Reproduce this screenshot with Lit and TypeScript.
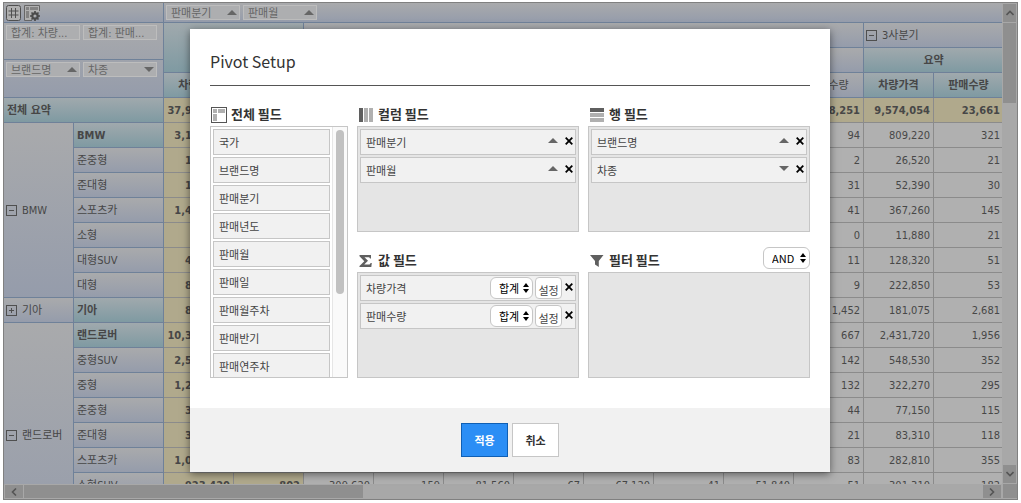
import { LitElement, html, css, svg, nothing } from "lit";
import { customElement, property } from "lit/decorators.js";
import { classMap } from "lit/directives/class-map.js";

interface Row {
  group?: string;
  open?: boolean;
  span?: number;
  label: string;
  total?: boolean;
  values: string[];
}

const pad = (head: string[], tail: string[]): string[] => [
  ...head,
  ...Array(12 - head.length - tail.length).fill(""),
  ...tail,
];

const ROWS: Row[] = [
  { group: "BMW", open: true, span: 7, label: "BMW", total: true, values: pad(["3,120,480"], ["94", "809,220", "321"]) },
  { label: "준중형", values: pad(["108,480"], ["2", "26,520", "21"]) },
  { label: "준대형", values: pad(["182,310"], ["31", "52,390", "30"]) },
  { label: "스포츠카", values: pad(["1,412,500"], ["41", "367,260", "145"]) },
  { label: "소형", values: pad(["47,520"], ["0", "11,880", "21"]) },
  { label: "대형SUV", values: pad(["491,200"], ["11", "128,320", "51"]) },
  { label: "대형", values: pad(["878,470"], ["9", "222,850", "53"]) },
  { group: "기아", open: false, span: 1, label: "기아", total: true, values: pad(["812,225"], ["1,452", "181,075", "2,681"]) },
  { group: "랜드로버", open: true, span: 9, label: "랜드로버", total: true, values: pad(["10,321,400"], ["667", "2,431,720", "1,956"]) },
  { label: "중형SUV", values: pad(["2,540,120"], ["142", "548,530", "352"]) },
  { label: "중형", values: pad(["1,268,300"], ["132", "322,270", "295"]) },
  { label: "준중형", values: pad(["312,600"], ["44", "77,150", "115"]) },
  { label: "준대형", values: pad(["342,840"], ["21", "83,310", "118"]) },
  { label: "스포츠카", values: pad(["1,084,220"], ["83", "282,810", "355"]) },
  { label: "소형SUV", values: ["923,420", "802", "309,620", "159", "81,560", "67", "67,120", "41", "51,840", "51", "301,310", "182"] },
  { label: "", values: pad([], []) },
  { label: "", values: pad([], []) },
];

const base = css`
  * {
    box-sizing: border-box;
  }
  svg {
    display: block;
    flex: none;
  }
`;

const arrow = (dir: string) => svg`
  <svg width="10" height="5" viewBox="0 0 10 5" fill="currentColor">
    <path d=${dir === "up" ? "M0 5L5 0L10 5Z" : "M0 0L5 5L10 0Z"} />
  </svg>`;

@customElement("pivot-grid")
class PivotGrid extends LitElement {
  static styles = [
    base,
    css`
      :host {
        display: grid;
        grid-template-columns: minmax(0, 1fr) 15px;
        grid-template-rows: minmax(0, 1fr) 15px;
        height: 100%;
        border: 1px solid #808080;
        background: #a8a8a8;
        color: #474747;
        font: 11px/14px "DejaVu Sans Condensed", "Noto Sans CJK KR", sans-serif;
      }
      .view {
        overflow: hidden;
      }
      table {
        table-layout: fixed;
        width: 1000px;
        border-spacing: 0;
      }
      .c-group,
      .c-value {
        width: 70px;
      }
      .c-kind {
        width: 90px;
      }
      th,
      td {
        height: 25px;
        padding: 2px 3px 0;
        border: 0 solid #6f8199;
        border-width: 0 1px 1px 0;
        font-weight: 400;
        overflow: hidden;
        white-space: nowrap;
      }
      .top th {
        height: 20px;
      }
      .top th,
      th.lead {
        padding: 0 2px;
      }
      th {
        background: linear-gradient(#a9aaac, #959cab);
        text-align: left;
      }
      .deep {
        background: linear-gradient(#a0a9ad, #7f9aa2);
        font-weight: 700;
      }
      .mid {
        text-align: center;
      }
      td {
        background: #b0b0b0;
        border-color: #8b8b8b;
        text-align: right;
      }
      .sum {
        background: #b0a98c;
        font-weight: 700;
      }
      th.corner {
        padding: 0;
        vertical-align: top;
      }
      .zone {
        height: 37px;
        padding: 2px;
        border-bottom: 1px solid #6f8199;
      }
      .zone + .zone {
        border-bottom: 0;
      }
      .chips,
      .tools {
        display: flex;
        align-items: center;
        gap: 3px;
      }
      .chip {
        display: flex;
        align-items: center;
        justify-content: space-between;
        width: 74px;
        height: 15px;
        padding: 0 2px 0 4px;
        border: 1px solid #bdbdbd;
        background: #adaeb0;
        color: #666;
      }
      .word {
        padding-top: 2px;
      }
      .node {
        display: flex;
        align-items: center;
        gap: 5px;
      }
      .tools button {
        display: block;
        padding: 0;
        border: 0;
        background: none;
        color: #555;
      }
      .bar-y,
      .bar-x {
        display: flex;
        gap: 1px;
        padding: 1px;
        color: #555;
      }
      .bar-y {
        flex-direction: column;
      }
      .end {
        display: grid;
        place-items: center;
        padding: 0;
        border: 0;
        background: #8f8f8f;
        color: #555;
      }
      .bar-y .end {
        width: 13px;
        height: 18px;
      }
      .bar-x .end {
        width: 18px;
        height: 13px;
      }
      .rail {
        flex: 1;
      }
      .thumb {
        background: #8f8f8f;
      }
      .bar-y .thumb {
        height: 80px;
      }
      .bar-x .thumb {
        width: 34%;
        height: 13px;
      }
      .joint {
        background: #8f8f8f;
        margin: 0 0 1px 1px;
      }
    `,
  ];

  private chip(text: string, dir = "") {
    return html`<span class="chip"><span class="word">${text}</span>${dir ? arrow(dir) : nothing}</span>`;
  }

  private node(text: string, open: boolean) {
    return html`<span class="node">
      <svg width="11" height="11" viewBox="0 0 11 11" fill="none" stroke="#4f4f4f">
        <rect x=".5" y=".5" width="10" height="10" />
        <path d=${open ? "M3 5.5H8" : "M3 5.5H8M5.5 3V8"} />
      </svg>
      <span class="word">${text}</span>
    </span>`;
  }

  private chevron(d: string) {
    return svg`<svg width="8" height="8" viewBox="0 0 8 8" fill="none" stroke="currentColor" stroke-width="1.6"><path d=${d} /></svg>`;
  }

  render() {
    return html`
      <div class="view">
        <table>
          <colgroup>
            <col class="c-group" />
            <col class="c-kind" />
            ${Array.from({ length: 12 }, () => html`<col class="c-value" />`)}
          </colgroup>
          <thead>
            <tr class="top">
              <th colspan="2">
                <div class="tools">
                  <button aria-label="Grid">
                    <svg width="15" height="16" viewBox="0 0 15 16" fill="none" stroke="#505050">
                      <rect x=".5" y=".5" width="14" height="15" rx="2" fill="#b0b0b0" />
                      <path d="M5.5 3V13M9.5 3V13M2.5 6H12.5M2.5 10H12.5" />
                    </svg>
                  </button>
                  <button aria-label="Pivot Setup">
                    <svg width="16" height="16" viewBox="0 0 16 16">
                      <path d="M8 15.5H.5V.5H15.5V6" fill="#b0b0b0" stroke="#666" />
                      <path d="M2 2H5V5H2ZM6 2H14V5H6ZM2 6H5V13H2Z" fill="#838383" />
                      <circle cx="11" cy="11" r="2.7" fill="none" stroke="#4b4b4b" stroke-width="2.2" />
                      <path d="M11 6V8M11 14V16M6 11H8M14 11H16M7.5 7.5L9 9M13 13L14.5 14.5M14.5 7.5L13 9M9 13L7.5 14.5" stroke="#4b4b4b" stroke-width="1.7" />
                    </svg>
                  </button>
                </div>
              </th>
              <th colspan="12">
                <div class="chips">${this.chip("판매분기", "up")}${this.chip("판매월", "up")}</div>
              </th>
            </tr>
            <tr>
              <th class="corner" colspan="2" rowspan="3">
                <div class="zone"><div class="chips">${this.chip("합계: 차량...")}${this.chip("합계: 판매...")}</div></div>
                <div class="zone"><div class="chips">${this.chip("브랜드명", "up")}${this.chip("차종", "down")}</div></div>
              </th>
              <th class="deep" colspan="2" rowspan="2"></th>
              <th colspan="8"></th>
              <th class="lead" colspan="2">${this.node("3사분기", true)}</th>
            </tr>
            <tr>
              <th class="deep" colspan="2"></th>
              <th colspan="2"></th>
              <th colspan="2"></th>
              <th colspan="2"></th>
              <th class="deep mid" colspan="2">요약</th>
            </tr>
            <tr>
              ${Array.from({ length: 12 }, (_, i) => html`
                <th class=${classMap({ mid: true, deep: i < 4 || i > 9 })}>${i % 2 ? "판매수량" : "차량가격"}</th>
              `)}
            </tr>
          </thead>
          <tbody>
            <tr>
              <th class="deep" colspan="2">전체 요약</th>
              ${pad(["37,942,610"], ["8,251", "9,574,054", "23,661"]).map((v) => html`<td class="sum">${v}</td>`)}
            </tr>
            ${ROWS.map(
              (r) => html`<tr>
                ${r.span ? html`<th class="lead" rowspan=${r.span}>${this.node(r.group!, r.open!)}</th>` : nothing}
                <th class=${classMap({ deep: !!r.total })}>${r.label}</th>
                ${r.values.map((v, i) => html`<td class=${classMap({ sum: i < 2 })}>${v}</td>`)}
              </tr>`
            )}
          </tbody>
        </table>
      </div>
      <div class="bar-y">
        <button class="end" aria-label="Up">${this.chevron("M0.5 6L4 2.5L7.5 6")}</button>
        <div class="thumb"></div>
        <div class="rail"></div>
        <button class="end" aria-label="Down">${this.chevron("M0.5 2L4 5.5L7.5 2")}</button>
      </div>
      <div class="bar-x">
        <button class="end" aria-label="Left">${this.chevron("M6 .5L2.5 4L6 7.5")}</button>
        <div class="thumb"></div>
        <div class="rail"></div>
        <button class="end" aria-label="Right">${this.chevron("M2 .5L5.5 4L2 7.5")}</button>
      </div>
      <div class="joint"></div>
    `;
  }
}

@customElement("field-item")
class FieldItem extends LitElement {
  @property() label = "";
  @property() sort = "";
  @property({ type: Boolean }) summary = false;
  @property({ type: Boolean }) removable = false;

  static styles = [
    base,
    css`
      :host {
        display: flex;
        align-items: center;
        flex: none;
        box-sizing: border-box;
        height: 26px;
        padding: 0 2px 0 5px;
        border: 1px solid #c6c6c6;
        background: #f1f1f1;
      }
      .name {
        flex: 1;
        padding-bottom: 1px;
      }
      .sort {
        margin-right: 7px;
        padding-bottom: 3px;
        color: #666;
      }
      .remove {
        padding: 0 0 3px;
        border: 0;
        background: none;
        color: #000;
      }
      .set {
        width: 27px;
        height: 22px;
        margin: 0 3px 0 2px;
        padding: 3px 0 0;
        border: 1px solid #c6c6c6;
        border-radius: 4px;
        background: #fff;
        color: #444;
        font: inherit;
      }
    `,
  ];

  render() {
    return html`
      <span class="name">${this.label}</span>
      ${this.sort ? html`<span class="sort">${arrow(this.sort)}</span>` : nothing}
      ${this.summary
        ? html`<pick-list label=${this.label} value="합계"></pick-list><button class="set">설정</button>`
        : nothing}
      ${this.removable
        ? html`<button class="remove" aria-label="${this.label} 삭제">
            <svg width="8" height="8" viewBox="0 0 8 8" stroke="currentColor" stroke-width="1.8"><path d="M.7 .7L7.3 7.3M7.3 .7L.7 7.3" /></svg>
          </button>`
        : nothing}
    `;
  }
}

@customElement("pick-list")
class PickList extends LitElement {
  @property() label = "";
  @property() value = "";

  static styles = [
    base,
    css`
      :host {
        display: grid;
        align-items: center;
        justify-items: end;
      }
      select,
      svg {
        grid-area: 1 / 1;
      }
      select {
        appearance: none;
        width: 100%;
        height: 22px;
        padding: 0 12px 0 8px;
        border: 1px solid #c6c6c6;
        border-radius: 6px;
        background: #fff;
        color: #000;
        font-family: inherit;
        font-size: 11px;
      }
      svg {
        margin-right: 4px;
        pointer-events: none;
      }
    `,
  ];

  render() {
    return html`
      <select aria-label=${this.label}>
        <option>${this.value}</option>
      </select>
      <svg width="6" height="10" viewBox="0 0 6 10"><path d="M0 4L3 0L6 4ZM0 6L3 10L6 6Z" /></svg>
    `;
  }
}

@customElement("pivot-setup")
class PivotSetup extends LitElement {
  static styles = [
    base,
    css`
      :host {
        display: block;
        width: 640px;
        max-width: 100%;
        background: #fff;
        box-shadow: 0 2px 8px rgba(0, 0, 0, 0.5);
        color: #444;
        font: 11px/16px "Noto Sans CJK KR", sans-serif;
      }
      .title {
        margin: 0 20px;
        padding: 20px 0 12px;
        border-bottom: 1px solid #555;
        color: #333;
        font-size: 16px;
        font-weight: 400;
        line-height: 24px;
      }
      .body {
        display: grid;
        grid-template-columns: 138px 1fr 1fr;
        column-gap: 9px;
        padding: 0 20px 30px;
      }
      .all {
        grid-row: span 2;
      }
      .head {
        display: flex;
        align-items: flex-end;
        height: 40px;
        gap: 5px;
        padding: 0 0 3px 2px;
      }
      .all .head {
        gap: 4px;
        padding-left: 1px;
      }
      .head svg {
        margin-bottom: 1px;
      }
      .all .head svg {
        margin-bottom: 0;
      }
      h3 {
        flex: 1;
        margin: 0;
        color: #333;
        font-size: 13px;
        font-weight: 700;
        line-height: 18px;
      }
      .head pick-list {
        width: 47px;
      }
      .box {
        display: flex;
        flex-direction: column;
        gap: 2px;
        height: 106px;
        padding: 2px;
        border: 1px solid #c6c6c6;
        background: #e5e5e5;
      }
      .scroll {
        display: flex;
        height: 252px;
        border: 1px solid #c6c6c6;
      }
      .list {
        display: flex;
        flex: 1;
        flex-direction: column;
        gap: 2px;
        padding: 2px;
        overflow: hidden;
      }
      .track {
        width: 15px;
        padding: 3px;
        border-left: 1px solid #e6e6e6;
        background: #fafafa;
      }
      .thumb {
        width: 8px;
        height: 164px;
        border-radius: 4px;
        background: #c1c1c1;
      }
      .foot {
        display: flex;
        justify-content: center;
        gap: 4px;
        padding: 15px;
        background: #f1f1f1;
      }
      .foot button {
        width: 47px;
        height: 34px;
        padding: 0;
        border: 1px solid #c6c6c6;
        background: #fff;
        color: #333;
        font: 700 11px/16px "Noto Sans CJK KR", sans-serif;
      }
      .foot .apply {
        border-color: #0f5fb4;
        background: #2b8ef5;
        color: #fff;
      }
    `,
  ];

  private fields = ["국가", "브랜드명", "판매분기", "판매년도", "판매월", "판매일", "판매월주차", "판매반기", "판매연주차"];

  render() {
    return html`
      <h2 class="title">Pivot Setup</h2>
      <div class="body">
        <section class="all">
          <div class="head">
            <svg width="16" height="16" viewBox="0 0 16 16">
              <rect x=".5" y=".5" width="15" height="15" fill="#fff" stroke="#555" />
              <path d="M2 2H6V6H2ZM7 2H14V6H7ZM2 7H6V14H2Z" fill="#b0b0b0" />
            </svg>
            <h3>전체 필드</h3>
          </div>
          <div class="scroll">
            <div class="list">${this.fields.map((f) => html`<field-item label=${f}></field-item>`)}</div>
            <div class="track"><div class="thumb"></div></div>
          </div>
        </section>
        <section>
          <div class="head">
            <svg width="14" height="14" viewBox="0 0 14 14" fill="#b0b0b0">
              <path d="M0 0H4V14H0Z" fill="#5f5f5f" />
              <path d="M5 0H9V14H5ZM10 0H14V14H10Z" />
            </svg>
            <h3>컬럼 필드</h3>
          </div>
          <div class="box">
            <field-item label="판매분기" sort="up" removable></field-item>
            <field-item label="판매월" sort="up" removable></field-item>
          </div>
        </section>
        <section>
          <div class="head">
            <svg width="14" height="14" viewBox="0 0 14 14" fill="#b0b0b0">
              <path d="M0 0H14V4H0Z" fill="#5f5f5f" />
              <path d="M0 5H14V9H0ZM0 10H14V14H0Z" />
            </svg>
            <h3>행 필드</h3>
          </div>
          <div class="box">
            <field-item label="브랜드명" sort="up" removable></field-item>
            <field-item label="차종" sort="down" removable></field-item>
          </div>
        </section>
        <section>
          <div class="head">
            <svg width="14" height="14" viewBox="0 0 14 14" fill="#5f5f5f">
              <path d="M.5 1H12V4.500H11C10.800 3.400 10.200 3.200 9 3.200H5.500L9 6.800L5.200 10.500H9.500C10.800 10.500 11.300 10.200 11.500 9H12.800L12.300 13H.5V12L5.300 7.300L.5 2.200Z" />
            </svg>
            <h3>값 필드</h3>
          </div>
          <div class="box">
            <field-item label="차량가격" summary removable></field-item>
            <field-item label="판매수량" summary removable></field-item>
          </div>
        </section>
        <section>
          <div class="head">
            <svg width="14" height="14" viewBox="0 0 14 14" fill="#5f5f5f">
              <path d="M0 1H13.500L8.800 7V13L5 10.500V7Z" />
            </svg>
            <h3>필터 필드</h3>
            <pick-list label="필터 필드" value="AND"></pick-list>
          </div>
          <div class="box"></div>
        </section>
      </div>
      <div class="foot">
        <button class="apply">적용</button>
        <button>취소</button>
      </div>
    `;
  }
}

@customElement("app-root")
class AppRoot extends LitElement {
  static styles = css`
    :host {
      display: block;
      position: relative;
      box-sizing: border-box;
      height: 100vh;
      padding: 2px 3px 3px;
      overflow: hidden;
      background: #fff;
    }
    pivot-grid {
      box-sizing: border-box;
    }
    .overlay {
      position: absolute;
      inset: 0 1px 2px 0;
      display: flex;
      align-items: center;
      justify-content: center;
    }
  `;

  render() {
    return html`
      <pivot-grid></pivot-grid>
      <div class="overlay"><pivot-setup role="dialog" aria-label="Pivot Setup"></pivot-setup></div>
    `;
  }
}
